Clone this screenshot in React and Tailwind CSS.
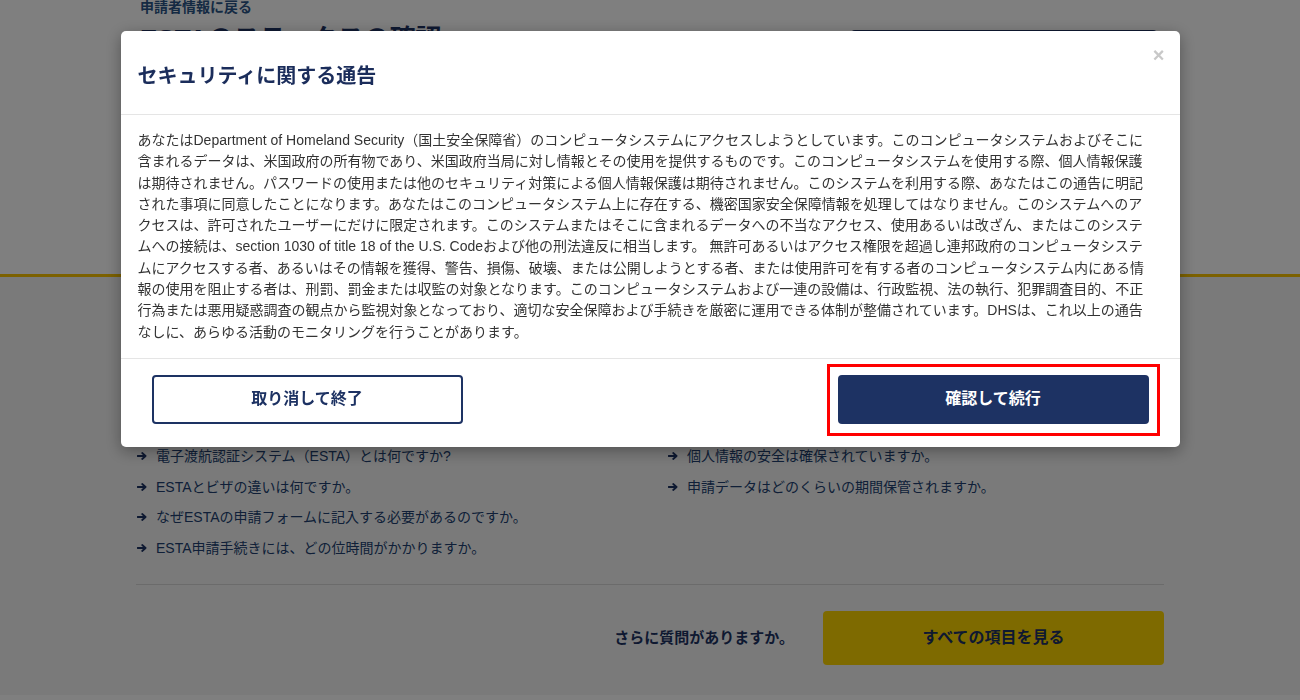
import React from 'react';

const font = { fontFamily: '"Liberation Sans", "Noto Sans CJK JP", sans-serif' };

const leftFaq = [
    '電子渡航認証システム（ESTA）とは何ですか?',
    'ESTAとビザの違いは何ですか。',
    'なぜESTAの申請フォームに記入する必要があるのですか。',
    'ESTA申請手続きには、どの位時間がかかりますか。',
];

const rightFaq = [
    '個人情報の安全は確保されていますか。',
    '申請データはどのくらいの期間保管されますか。',
];

// Line breaks follow the reference exactly
const noticeLines = [
    'あなたはDepartment of Homeland Security（国土安全保障省）のコンピュータシステムにアクセスしようとしています。このコンピュータシステムおよびそこに',
    '含まれるデータは、米国政府の所有物であり、米国政府当局に対し情報とその使用を提供するものです。このコンピュータシステムを使用する際、個人情報保護',
    'は期待されません。パスワードの使用または他のセキュリティ対策による個人情報保護は期待されません。このシステムを利用する際、あなたはこの通告に明記',
    'された事項に同意したことになります。あなたはこのコンピュータシステム上に存在する、機密国家安全保障情報を処理してはなりません。このシステムへのア',
    'クセスは、許可されたユーザーにだけに限定されます。このシステムまたはそこに含まれるデータへの不当なアクセス、使用あるいは改ざん、またはこのシステ',
    'ムへの接続は、section 1030 of title 18 of the U.S. Codeおよび他の刑法違反に相当します。 無許可あるいはアクセス権限を超過し連邦政府のコンピュータシステ',
    'ムにアクセスする者、あるいはその情報を獲得、警告、損傷、破壊、または公開しようとする者、または使用許可を有する者のコンピュータシステム内にある情',
    '報の使用を阻止する者は、刑罰、罰金または収監の対象となります。このコンピュータシステムおよび一連の設備は、行政監視、法の執行、犯罪調査目的、不正',
    '行為または悪用疑惑調査の観点から監視対象となっており、適切な安全保障および手続きを厳密に運用できる体制が整備されています。DHSは、これ以上の通告',
    'なしに、あらゆる活動のモニタリングを行うことがあります。',
];

function Arrow() {
    return (
        <svg width="10" height="8" viewBox="0 0 10 8" className="shrink-0">
            <path d="M0.5 4H8.2M5.2 1L8.6 4L5.2 7" fill="none" stroke="#1d3263" strokeWidth="1.8" strokeLinecap="round" strokeLinejoin="round" />
        </svg>
    );
}

function FaqItem({ text }) {
    return (
        <li className="flex items-center gap-[9px] h-[30.5px] pl-[1px]">
            <Arrow />
            <span className="text-[14px] leading-[20px] text-[#203f70]">{text}</span>
        </li>
    );
}

export default function App() {
    return (
        <div className="min-h-screen bg-white" style={font}>
            {/* Page behind the modal */}
            <div className="h-[274px] border-b-[3px] border-[#f9c300] bg-white box-content">
                <div className="mx-auto w-[1028px] flex justify-between">
                    <div className="pl-[4px]">
                        <a className="block -mt-[1px] text-[14px] leading-[16px] font-bold text-[#2a5587]">申請者情報に戻る</a>
                        <h1 className="mt-[8px] text-[26px] leading-[32px] font-bold text-[#1d3263]">ESTAのステータスの確認</h1>
                    </div>
                    <div className="mt-[30px] mr-[7px] w-[306px] h-[44px] rounded bg-[#1d3263]"></div>
                </div>
            </div>

            <div className="bg-[#f5f5f5] pb-[30px]">
                <div className="mx-auto w-[1028px] pt-[164px]">
                    <div className="grid grid-cols-[531px_1fr]">
                        <ul>
                            {leftFaq.map((t) => <FaqItem key={t} text={t} />)}
                        </ul>
                        <ul>
                            {rightFaq.map((t) => <FaqItem key={t} text={t} />)}
                        </ul>
                    </div>
                    <div className="mt-[21px] border-t border-[#d6d6d6]"></div>
                    <div className="pt-[26px] flex justify-end items-center gap-[29px]">
                        <span className="text-[15px] font-bold text-[#1d3263]">さらに質問がありますか。</span>
                        <button className="w-[341px] h-[54px] rounded bg-[#fdd400] text-[16px] font-bold text-[#1d3263]">
                            すべての項目を見る
                        </button>
                    </div>
                </div>
            </div>

            {/* Backdrop */}
            <div className="fixed inset-0 bg-black opacity-50"></div>

            {/* Modal */}
            <div className="fixed inset-0 flex justify-center items-start pt-[31px]">
                <div className="relative w-[1059px] bg-white rounded-[5px] shadow-[0_4px_16px_rgba(0,0,0,0.35)]">
                    <div className="pl-[17px] pt-[34px] pb-[27px] border-b border-[#e5e5e5]">
                        <h3 className="text-[20px] leading-[22px] font-bold text-[#1b2d5b]">セキュリティに関する通告</h3>
                    </div>
                    <button className="absolute top-[14px] right-[15px] text-[20px] leading-[20px] font-bold text-[#c8c8c8]">×</button>

                    <div className="pl-[17px] pr-[20px] pt-[15px] pb-[15px] border-b border-[#e5e5e5]">
                        <div className="text-[14px] text-[#333333] whitespace-nowrap">
                            {noticeLines.map((line, i) => (
                                <div key={i} className="h-[21.3px] leading-[21.3px]">{line}</div>
                            ))}
                        </div>
                    </div>

                    <div className="flex justify-between px-[31px] pt-[16px] pb-[23px]">
                        <button className="w-[311px] h-[49px] rounded-[4px] border-2 border-[#1d3263] bg-white text-[16px] font-bold text-[#1d3263]">
                            取り消して終了
                        </button>
                        <div className="relative">
                            <button className="w-[311px] h-[49px] rounded-[4px] bg-[#1d3263] text-[16px] font-bold text-white">
                                確認して続行
                            </button>
                            <div className="absolute -left-[11px] -right-[11px] -top-[11px] -bottom-[12px] border-[3px] border-[#ff0000]"></div>
                        </div>
                    </div>
                </div>
            </div>
        </div>
    );
}
